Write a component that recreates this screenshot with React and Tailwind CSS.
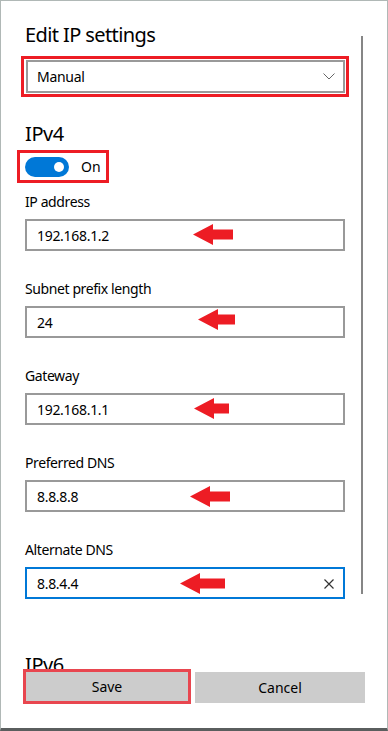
import React from "react";

function Arrow({ left, width, dy }) {
  return (
    <svg
      className="absolute"
      style={{ left: left, top: `calc(50% - 10.5px + ${dy}px)` }}
      width={width}
      height="21"
      viewBox={`0 0 ${width} 21`}
    >
      <polygon
        points={`0,10.5 20,0 20,5.5 ${width},5.5 ${width},15.5 20,15.5 20,21`}
        fill="#ed1c24"
      />
    </svg>
  );
}

function Field({ label, value, arrow, focused }) {
  return (
    <div className="mb-[28px]">
      <div className="text-[14px] leading-[20px] tracking-[-0.4px]">{label}</div>
      <div
        className={
          focused
            ? "relative mt-[7px] flex h-[32px] w-[320px] items-center border-2 border-[#0078d7] pl-[10px] text-[14px] tracking-[-0.3px]"
            : "relative mt-[7px] flex h-[32px] w-[320px] items-center border-2 border-[#999999] pl-[10px] text-[14px] tracking-[-0.3px]"
        }
      >
        <span>{value}</span>
        <Arrow left={arrow.left} width={arrow.width} dy={arrow.dy} />
        {focused && (
          <svg
            className="absolute right-[9px] top-[10px]"
            width="10"
            height="10"
            viewBox="0 0 10 10"
          >
            <path d="M0.5 0.5 L9.5 9.5 M9.5 0.5 L0.5 9.5" stroke="#333" strokeWidth="1.2" fill="none" />
          </svg>
        )}
      </div>
    </div>
  );
}

export default function App() {
  return (
    <div className="relative h-[731px] w-[388px] overflow-hidden border-x border-t border-[#b0b8b6] border-b-[3px] border-b-[#5a5e5e] bg-white font-['Noto_Sans',sans-serif] text-black">
      {/* scrollbar */}
      <div className="absolute left-[360px] top-[35px] h-[558px] w-[2px] bg-[#868686]" />

      <div className="pl-[24px] pt-[20px]">
        <h1 className="text-[20px] leading-[28px] tracking-[-0.6px]">Edit IP settings</h1>

        <div className="-ml-[4px] mt-[7px] h-[41px] w-[328px] border-[3px] border-[#ed1c24] pl-[2px] pr-px pt-[1px]">
          <div className="flex h-[33px] items-center justify-between border-2 border-[#999999] pl-[9px] pr-[8px] text-[14px] tracking-[-0.3px]">
            <span className="-mt-px">Manual</span>
            <svg width="12" height="7" viewBox="0 0 12 7">
              <path d="M0.5 0.5 L6 6 L11.5 0.5" stroke="#666" strokeWidth="1" fill="none" />
            </svg>
          </div>
        </div>

        <h2 className="mt-[23px] text-[20px] leading-[28px] tracking-[-0.4px]">IPv4</h2>

        <div className="-ml-[8px] mt-[2px] flex h-[33px] w-[92px] items-center border-[3px] border-[#ed1c24] pl-[5px]">
          <div className="flex h-[20px] w-[44px] items-center justify-end rounded-full bg-[#0078d7] pr-[5px]">
            <div className="h-[10px] w-[10px] rounded-full bg-white" />
          </div>
          <span className="ml-[12px] text-[14px] leading-[20px]">On</span>
        </div>

        <div className="mt-[9px]">
          <Field label="IP address" value="192.168.1.2" arrow={{ left: 166, width: 40, dy: -1 }} />
          <Field label="Subnet prefix length" value="24" arrow={{ left: 171, width: 37, dy: -3 }} />
          <Field label="Gateway" value="192.168.1.1" arrow={{ left: 167, width: 35, dy: -1 }} />
          <Field label="Preferred DNS" value="8.8.8.8" arrow={{ left: 163, width: 40, dy: 0 }} />
          <Field label="Alternate DNS" value="8.8.4.4" arrow={{ left: 153, width: 45, dy: 0 }} focused />
        </div>

        <h2 className="mt-[52px] text-[20px] leading-[28px] tracking-[-0.4px]">IPv6</h2>
      </div>

      {/* footer buttons overlay */}
      <div className="absolute left-[22px] top-[668px] flex items-start">
        <div className="flex h-[35px] w-[168px] items-center justify-center border-[3px] border-[#e8464f] bg-[#cccccc] text-[14px]">
          Save
        </div>
        <div className="ml-[4px] mt-[3px] flex h-[31px] w-[170px] items-center justify-center bg-[#cccccc] text-[14px]">
          Cancel
        </div>
      </div>
    </div>
  );
}
